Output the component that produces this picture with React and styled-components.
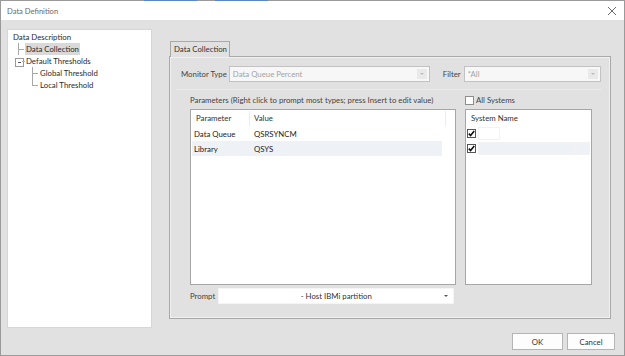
import React from "react";
import styled, { createGlobalStyle } from "styled-components";

const Global = createGlobalStyle`
  html, body {
    margin: 0;
    padding: 0;
    background: #e1e1e1;
  }
  * {
    box-sizing: border-box;
  }
`;

const Window = styled.div`
  width: 625px;
  height: 356px;
  display: flex;
  flex-direction: column;
  background: #e1e1e1;
  border: 1px solid #9a9a9a;
  border-top: none;
  font-family: Lato, "Noto Sans", sans-serif;
  font-size: 7.8px;
  color: #333;
  overflow: hidden;
`;

const TitleBar = styled.div`
  height: 20px;
  flex: none;
  display: flex;
  align-items: center;
  justify-content: space-between;
  padding: 1px 7px 0 6px;
  background:
    linear-gradient(#5b87c0, #5b87c0) 143px 0 / 53px 1px no-repeat,
    linear-gradient(#5b87c0, #5b87c0) 214px 0 / 53px 1px no-repeat,
    linear-gradient(#9a9a9a, #9a9a9a) 0 0 / 100% 1px no-repeat,
    #ffffff;
`;

const Title = styled.span`
  font-size: 7.6px;
  color: #6a6a6a;
`;

const Body = styled.div`
  display: flex;
  padding: 9px 13px 0 6px;
`;

const Tree = styled.ul`
  list-style: none;
  margin: 0;
  width: 145px;
  height: 299px;
  flex: none;
  padding: 1px 0 0 4px;
  background: #ffffff;
  border: 1px solid #d6d6d6;
`;

const TreeRow = styled.li`
  display: flex;
  align-items: center;
  height: 12px;
  padding-left: ${p => p.$indent}px;
`;

const Elbow = styled.span`
  position: relative;
  width: 7px;
  height: 12px;
  flex: none;

  &::before {
    content: "";
    position: absolute;
    left: 0;
    top: 0;
    height: ${p => (p.$last ? 6 : 12)}px;
    border-left: 1px solid #a8a8a8;
  }
  &::after {
    content: "";
    position: absolute;
    left: 0;
    top: 6px;
    width: 6px;
    border-top: 1px solid #a8a8a8;
  }
`;

const Expander = styled.span`
  position: relative;
  width: 10px;
  height: 12px;
  flex: none;

  &::before {
    content: "";
    position: absolute;
    left: 0;
    top: 3px;
    width: 7px;
    height: 7px;
    border: 1px solid #9a9a9a;
    background: linear-gradient(#555, #555) center / 3px 1px no-repeat, #fff;
  }
  &::after {
    content: "";
    position: absolute;
    left: 7px;
    top: 6px;
    width: 3px;
    border-top: 1px solid #a8a8a8;
  }
`;

const TreeLabel = styled.span`
  height: 12px;
  line-height: 12px;
  padding: 0 1px;
  white-space: nowrap;
  color: #2b2b2b;
  background: ${p => (p.$selected ? "#d9d9d9" : "transparent")};
`;

const Main = styled.div`
  margin-left: 17px;
  flex: 1;
  display: flex;
  flex-direction: column;
  padding-top: 12px;
`;

const TabStrip = styled.div`
  display: flex;
  height: 15px;
  padding-left: 1px;
`;

const Tab = styled.div`
  width: 60px;
  height: 16px;
  padding: 2px 0 0 3px;
  background: #e1e1e1;
  border: 1px solid #a9a9a9;
  border-bottom: none;
  position: relative;
  z-index: 1;
  white-space: nowrap;
`;

const Panel = styled.div`
  height: 263px;
  border: 1px solid #a9a9a9;
  box-shadow: inset 0 0 0 1px #f0f0f0;
  display: flex;
  flex-direction: column;
`;

const TopRow = styled.div`
  display: flex;
  align-items: center;
  height: 16px;
  margin: 9px 0 0 11px;
`;

const FieldLabel = styled.span`
  color: #444;
  margin-left: ${p => p.$lead || 0}px;
  margin-right: ${p => p.$gap || 3}px;
  white-space: nowrap;
`;

const Combo = styled.div`
  width: ${p => p.$width}px;
  height: 16px;
  flex: none;
  display: flex;
  align-items: center;
  justify-content: ${p => (p.$center ? "center" : "flex-start")};
  position: relative;
  padding: 0 3px;
  background: ${p => (p.$disabled ? "#f7f7f7" : "#ffffff")};
  border: 1px solid ${p => (p.$disabled ? "#c2c2c2" : "#f4f4f4")};
  color: ${p => (p.$disabled ? "#a3a3a3" : "#333")};
  white-space: nowrap;
`;

const DropButton = styled.span`
  position: absolute;
  right: 2px;
  top: 2px;
  bottom: 2px;
  width: 10px;
  background: ${p => (p.$disabled ? "#e9e9e9" : "transparent")};
  display: flex;
  align-items: center;
  justify-content: center;

  &::before {
    content: "";
    border-left: 2px solid transparent;
    border-right: 2px solid transparent;
    border-top: 2px solid ${p => (p.$disabled ? "#bcbcbc" : "#555")};
  }
`;

const Separator = styled.div`
  height: 1px;
  margin: 7px 9px 0 6px;
  background: #d4d4d4;
  border-bottom: 1px solid #ececec;
`;

const Grid = styled.div`
  display: grid;
  grid-template-columns: 266px 127px;
  grid-template-rows: 15px 176px 15px;
  column-gap: 9px;
  margin: 4px 0 0 20px;
`;

const SectionLabel = styled.div`
  display: flex;
  align-items: center;
  gap: 2px;
  color: #444;
  white-space: nowrap;
  padding-bottom: 3px;
`;

const ListBox = styled.div`
  background: #ffffff;
  border: 1px solid #a6a6a6;
  padding: 1px 1px 0 1px;
`;

const Row = styled.div`
  display: grid;
  grid-template-columns: ${p => p.$cols};
  height: 15px;
  align-items: center;
  background: ${p => (p.$selected ? "#eef2f7" : "transparent")};
  margin-right: ${p => p.$trim || 0}px;
`;

const HeadCell = styled.div`
  height: 15px;
  line-height: 15px;
  padding-left: ${p => p.$pad || 4}px;
  border-right: ${p => (p.$divider ? "1px solid #ececec" : "none")};
  color: #333;
  white-space: nowrap;
`;

const Cell = styled.div`
  padding-left: ${p => p.$pad || 0}px;
  white-space: nowrap;
  color: #222;
`;

const Check = styled.span`
  width: 9px;
  height: 9px;
  flex: none;
  border: 1px solid ${p => (p.$checked ? "#555" : "#8d8d8d")};
  background: #fff;
  display: inline-flex;
  align-items: center;
  justify-content: center;
`;

const SysCell = styled.div`
  height: 13px;
  margin-left: ${p => (p.$flush ? 0 : 2)}px;
  border: 1px solid #f2f2f2;
  background: ${p => (p.$selected ? "#eef2f7" : "#ffffff")};
`;

const PromptRow = styled.div`
  display: flex;
  align-items: center;
  margin-top: 6px;
`;

const Footer = styled.div`
  display: flex;
  justify-content: flex-end;
  gap: 4px;
  padding: 5px 9px 0 0;
`;

const Button = styled.button`
  width: ${p => p.$width}px;
  height: 17px;
  padding: 0;
  font-family: inherit;
  font-size: 7.8px;
  color: #333;
  background: #fdfdfd;
  border: 1px solid #b5b5b5;
`;

const CloseIcon = () => (
  <svg width="10" height="10" viewBox="0 0 10 10">
    <path d="M1 1 L9 9 M9 1 L1 9" stroke="#6a6a6a" strokeWidth="1" />
  </svg>
);

const Tick = () => (
  <svg width="7" height="7" viewBox="0 0 7 7">
    <path d="M0.8 3.6 L2.6 5.6 L6.2 1" stroke="#111" strokeWidth="1.6" fill="none" />
  </svg>
);

export default function App() {
  return (
    <>
      <Global />
      <Window>
        <TitleBar>
          <Title>Data Definition</Title>
          <CloseIcon />
        </TitleBar>

        <Body>
          <Tree>
            <TreeRow $indent={0}>
              <TreeLabel>Data Description</TreeLabel>
            </TreeRow>
            <TreeRow $indent={6}>
              <Elbow />
              <TreeLabel $selected>Data Collection</TreeLabel>
            </TreeRow>
            <TreeRow $indent={3}>
              <Expander />
              <TreeLabel>Default Thresholds</TreeLabel>
            </TreeRow>
            <TreeRow $indent={20}>
              <Elbow />
              <TreeLabel>Global Threshold</TreeLabel>
            </TreeRow>
            <TreeRow $indent={20}>
              <Elbow $last />
              <TreeLabel>Local Threshold</TreeLabel>
            </TreeRow>
          </Tree>

          <Main>
            <TabStrip>
              <Tab>Data Collection</Tab>
            </TabStrip>
            <Panel>
              <TopRow>
                <FieldLabel $gap={2}>Monitor Type</FieldLabel>
                <Combo $width={201} $disabled>
                  Data Queue Percent
                  <DropButton $disabled />
                </Combo>
                <FieldLabel $lead={13} $gap={3}>Filter</FieldLabel>
                <Combo $width={137} $disabled>
                  *All
                  <DropButton $disabled />
                </Combo>
              </TopRow>

              <Separator />

              <Grid>
                <SectionLabel>
                  Parameters (Right click to prompt most types; press Insert to edit value)
                </SectionLabel>
                <SectionLabel>
                  <Check />
                  All Systems
                </SectionLabel>

                <ListBox>
                  <Row $cols="58px 196px 1fr">
                    <HeadCell $divider>Parameter</HeadCell>
                    <HeadCell $divider>Value</HeadCell>
                    <HeadCell />
                  </Row>
                  <Row $cols="58px 1fr" $trim={12}>
                    <Cell $pad={2}>Data Queue</Cell>
                    <Cell $pad={4}>QSRSYNCM</Cell>
                  </Row>
                  <Row $cols="58px 1fr" $trim={12} $selected>
                    <Cell $pad={2}>Library</Cell>
                    <Cell $pad={4}>QSYS</Cell>
                  </Row>
                </ListBox>

                <ListBox>
                  <Row $cols="1fr">
                    <HeadCell $pad={4}>System Name</HeadCell>
                  </Row>
                  <Row $cols="9px 24px 1fr">
                    <Check $checked><Tick /></Check>
                    <SysCell />
                    <div />
                  </Row>
                  <Row $cols="9px 98px 1fr">
                    <Check $checked><Tick /></Check>
                    <SysCell $selected />
                    <SysCell $selected $flush />
                  </Row>
                </ListBox>

                <PromptRow>
                  <FieldLabel $gap={3}>Prompt</FieldLabel>
                  <Combo $width={236} $center>
                    - Host IBMi partition
                    <DropButton />
                  </Combo>
                </PromptRow>
              </Grid>
            </Panel>
          </Main>
        </Body>

        <Footer>
          <Button $width={51}>OK</Button>
          <Button $width={48}>Cancel</Button>
        </Footer>
      </Window>
    </>
  );
}
